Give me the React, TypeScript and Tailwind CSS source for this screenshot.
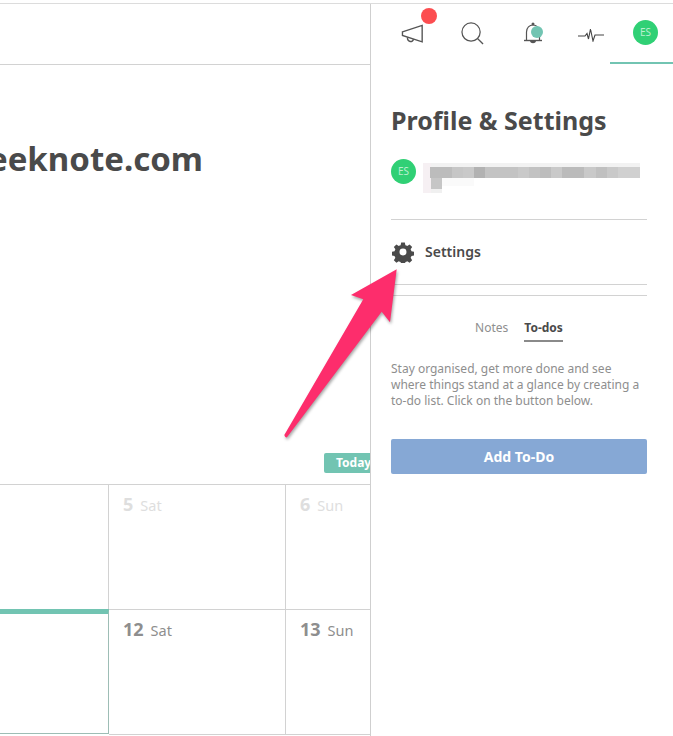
import React from 'react';

const blurCells: [number, number, number, number, string][] = [
  [423, 163, 217, 15, '#f2f2f2'],
  [423, 163, 8, 30, '#f6f0f3'],
  [430, 167, 210, 11, '#c9c9c9'],
  [430, 167, 22, 11, '#bcbcbc'],
  [452, 167, 11, 11, '#c6c6c6'],
  [474, 167, 11, 11, '#b2b2b2'],
  [485, 167, 33, 11, '#c3c3c3'],
  [529, 167, 11, 11, '#c2c2c2'],
  [540, 167, 11, 11, '#bdbdbd'],
  [562, 167, 22, 11, '#bbbbbb'],
  [596, 167, 11, 11, '#c0c0c0'],
  [618, 167, 22, 11, '#d0d0d0'],
  [441, 178, 33, 8, '#fafafa'],
  [431, 178, 11, 11, '#c6c6c6'],
  [431, 189, 11, 4, '#f0f0f0'],
];

function Megaphone() {
  return (
    <svg width="24" height="22" viewBox="0 0 26 24" fill="none" stroke="#555" strokeWidth="1.5">
      <path d="M1.5 8.5 L23 1.5 V19.5 L1.5 12.5 Z" />
      <path d="M7 14.5 C6.5 20 13 20.5 13.5 16.5" />
    </svg>
  );
}

function SearchGlass() {
  return (
    <svg width="23" height="23" viewBox="0 0 24 24" fill="none" stroke="#555" strokeWidth="1.3">
      <circle cx="10.5" cy="10.5" r="9.5" />
      <path d="M17.5 17.5 L23 23" />
    </svg>
  );
}

function Bell() {
  return (
    <svg width="22" height="24" viewBox="0 0 22 24" fill="none" stroke="#555" strokeWidth="1.2">
      <circle cx="10" cy="2" r="1.5" fill="#555" stroke="none" />
      <path d="M3.5 18 V10 C3.5 5.5 6.5 3 10 3 C13.5 3 16.5 5.5 16.5 10 V18" />
      <path d="M1 18.5 H19" strokeWidth="1.4" />
      <path d="M7 19 H13 C12.5 22 7.5 22 7 19 Z" fill="#555" stroke="none" />
    </svg>
  );
}

function Pulse() {
  return (
    <svg width="26" height="14" viewBox="0 0 26 14" fill="none" stroke="#444" strokeWidth="1.1">
      <path d="M0 8 H7 L9 5.5 L10.5 11 L12.5 1 L15 13 L17 7 H26" />
    </svg>
  );
}

function Gear() {
  return (
    <svg width="22" height="22" viewBox="0 0 24 24" fill="#4a4a4a">
      <path
        fillRule="evenodd"
        d="M10 1.5h4l.6 3c.7.2 1.4.5 2 .9l2.6-1.7 2.8 2.8-1.7 2.6c.4.6.7 1.3.9 2l3 .6v4l-3 .6c-.2.7-.5 1.4-.9 2l1.7 2.6-2.8 2.8-2.6-1.7c-.6.4-1.3.7-2 .9l-.6 3h-4l-.6-3c-.7-.2-1.4-.5-2-.9l-2.6 1.7-2.8-2.8 1.7-2.6c-.4-.6-.7-1.3-.9-2l-3-.6v-4l3-.6c.2-.7.5-1.4.9-2L2 6.5l2.8-2.8 2.6 1.7c.6-.4 1.3-.7 2-.9l.6-3ZM12 8.2a3.8 3.8 0 1 0 0 7.6 3.8 3.8 0 0 0 0-7.6Z"
      />
    </svg>
  );
}

function DayLabel({ day, name, faded }: { day: string; name: string; faded?: boolean }) {
  return (
    <div className={`flex items-baseline gap-[7px] pl-[14px] pt-[7px] ${faded ? 'text-[#dedede]' : 'text-[#8e8e8e]'}`}>
      <span className="text-[18px] font-bold leading-[24px]">{day}</span>
      <span className="text-[14.5px] leading-[24px]">{name}</span>
    </div>
  );
}

export default function App() {
  return (
    <div
      className="relative w-[673px] h-[736px] overflow-hidden bg-white pt-[3px]"
      style={{ fontFamily: '"Noto Sans", "Open Sans", sans-serif' }}
    >
      <div className="flex h-full border-t border-[#dcdcdc]">
        {/* calendar side */}
        <div className="w-[371px] shrink-0 border-r border-[#cfcfcf] flex flex-col overflow-hidden">
          <div className="h-[61px] shrink-0 border-b border-[#d2d2d2]" />
          <div className="h-[419px] shrink-0 relative overflow-hidden">
            <div className="w-[203px] flex justify-end mt-[71px]">
              <h1 className="text-[33px] leading-[46px] font-bold text-[#4a4a4a] whitespace-nowrap">Weeknote.com</h1>
            </div>
            <div className="absolute right-0 top-[388px] w-[46px] h-[20px] bg-[#72c4b2] rounded-l-[2px] pl-[12px] text-[12px] leading-[20px] font-bold text-white whitespace-nowrap overflow-hidden">
              Today
            </div>
          </div>
          <div className="grid grid-cols-[109px_177px_84px] grid-rows-[125px_125px] border-t border-[#d2d2d2]">
            <div className="border-r border-[#d2d2d2] border-b" />
            <div className="border-r border-[#d2d2d2] border-b">
              <DayLabel day="5" name="Sat" faded />
            </div>
            <div className="border-b border-[#d2d2d2]">
              <DayLabel day="6" name="Sun" faded />
            </div>
            <div className="border-t-[5px] border-t-[#72c4b2] border-r border-r-[#9dbdb5] border-b border-b-[#9dbdb5] -mt-px h-[125px]" />
            <div className="border-r border-b border-[#d2d2d2]">
              <DayLabel day="12" name="Sat" />
            </div>
            <div className="border-b border-[#d2d2d2]">
              <DayLabel day="13" name="Sun" />
            </div>
          </div>
        </div>

        {/* profile side */}
        <div className="flex-1 min-w-0">
          <div className="h-[60px] relative flex items-start">
            <div className="w-[61px] pl-[30px] pt-[20px] h-full relative">
              <Megaphone />
              <span className="absolute left-[50px] top-[4px] w-[16px] h-[16px] rounded-full bg-[#fc4d50]" />
            </div>
            <div className="pl-[29px] pt-[18px]">
              <SearchGlass />
            </div>
            <div className="relative pl-[39px] pt-[18px]">
              <Bell />
              <span className="absolute left-[47px] top-[22px] w-[12px] h-[12px] rounded-full bg-[#72c4b2]" />
            </div>
            <div className="pl-[33px] pt-[24px]">
              <Pulse />
            </div>
            <div className="absolute right-0 top-0 w-[63px] h-[60px] border-b-2 border-[#72c4b2] pl-[23px] pt-[16px]">
              <div className="w-[25px] h-[25px] rounded-full bg-[#30d075] text-[#b9efd0] text-[10px] leading-[25px] text-center">ES</div>
            </div>
          </div>

          <div className="pl-[20px] pr-[26px]">
            <h2 className="mt-[38px] text-[25px] leading-[36px] font-bold text-[#4a4a4a] whitespace-nowrap">Profile &amp; Settings</h2>
            <div className="mt-[21px] h-[61px] border-b border-[#d2d2d2]">
              <div className="w-[25px] h-[25px] rounded-full bg-[#30d075] text-[#b9efd0] text-[10px] leading-[25px] text-center">ES</div>
            </div>
            <div className="h-[65px] border-b border-[#d2d2d2] flex items-center gap-[11px] pl-[1px]">
              <Gear />
              <span className="text-[14px] font-semibold text-[#4a4a4a] -translate-y-px">Settings</span>
            </div>
            <div className="mt-[10px] border-t border-[#d2d2d2] pt-[21px] flex justify-center gap-[15px] text-[12px] leading-[21px]">
              <span className="text-[#8e8e8e] pr-[1px]">Notes</span>
              <span className="font-bold text-[#4a4a4a] border-b-2 border-[#8a8a8a] h-[25px]">To-dos</span>
            </div>
            <p className="mt-[19px] text-[12px] leading-[16px] text-[#8e8e8e] whitespace-nowrap">
              Stay organised, get more done and see
              <br />
              where things stand at a glance by creating a
              <br />
              to-do list. Click on the button below.
            </p>
            <button className="mt-[30px] w-full h-[35px] bg-[#86a8d5] rounded-[2px] text-white text-[14px] font-bold">Add To-Do</button>
          </div>
        </div>
      </div>

      {/* pixelated email */}
      <svg className="absolute left-0 top-0 pointer-events-none" width="673" height="736">
        {blurCells.map(([x, y, w, h, fill], i) => (
          <rect key={i} x={x} y={y} width={w} height={h} fill={fill} />
        ))}
      </svg>

      {/* annotation arrow */}
      <svg className="absolute left-0 top-0 pointer-events-none" width="673" height="736" style={{ filter: 'drop-shadow(1px 2px 1.5px rgba(0,0,0,0.35))' }}>
        <path
          d="M396.7 269.3 L351 295 L363.3 299.3 L284.3 435 Q285 438 287 437.3 L381.7 311.7 L390 322.3 Z"
          fill="#fd2d6c"
        />
      </svg>
    </div>
  );
}
